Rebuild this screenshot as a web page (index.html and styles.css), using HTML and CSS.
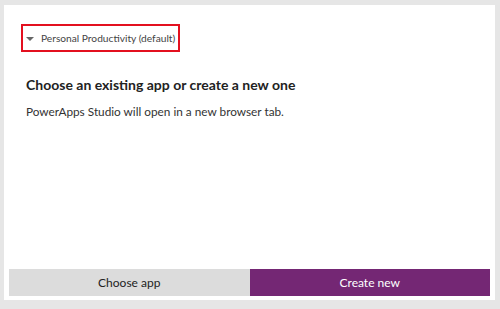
FILE: index.html
```html
<!DOCTYPE html>
<html lang="en">
<head>
    <meta charset="UTF-8">
    <title>Create app</title>
    <link rel="stylesheet" href="styles.css">
</head>
<body>
    <div class="panel">
        <div class="body">
            <div class="env-picker">
                <span class="caret"></span>
                <span class="env-name">Personal Productivity (default)</span>
            </div>
            <h2>Choose an existing app or create a new one</h2>
            <p>PowerApps Studio will open in a new browser tab.</p>
        </div>
        <div class="actions">
            <button class="btn btn-secondary">Choose app</button>
            <button class="btn btn-primary">Create new</button>
        </div>
    </div>
</body>
</html>
```

FILE: styles.css
```css
* {
    margin: 0;
    padding: 0;
    box-sizing: border-box;
}

body {
    font-family: Lato, "Liberation Sans", sans-serif;
    background: #e6e6e6;
    padding: 5px 5px 9px 4px;
    width: 500px;
    height: 309px;
}

.panel {
    width: 491px;
    height: 295px;
    background: white;
    display: flex;
    flex-direction: column;
    padding: 0 5px 4px 5px;
}

.body {
    flex: 1;
    padding: 19px 0 0 17px;
    white-space: nowrap;
}

.env-picker {
    display: inline-flex;
    align-items: center;
    gap: 7px;
    width: 159px;
    height: 28px;
    margin-left: -5px;
    padding-left: 3px;
    border: 2px solid #e3101f;
    color: #444;
    font-size: 10.2px;
}

.caret {
    width: 0;
    height: 0;
    border-left: 4px solid transparent;
    border-right: 4px solid transparent;
    border-top: 4px solid #666;
    margin-top: 1px;
}

h2 {
    margin-top: 24px;
    font-size: 14px;
    font-weight: 700;
    color: #222;
}

p {
    margin-top: 11px;
    font-size: 11.8px;
    color: #333;
}

.actions {
    display: flex;
    height: 27px;
}

.btn {
    flex: 1;
    border: none;
    font-family: inherit;
    font-size: 12px;
}

.btn-secondary {
    background: #dcdcdc;
    color: #222;
}

.btn-primary {
    background: #742774;
    color: white;
}
```
